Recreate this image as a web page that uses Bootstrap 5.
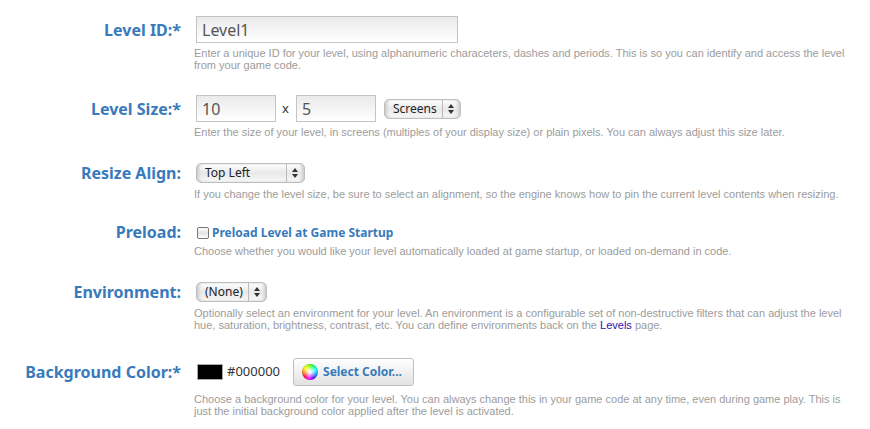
<!DOCTYPE html>
<html lang="en">
<head>
<meta charset="utf-8">
<meta name="viewport" content="width=device-width, initial-scale=1">
<title>Edit Level</title>
<link href="https://cdn.jsdelivr.net/npm/bootstrap@5.3.0/dist/css/bootstrap.min.css" rel="stylesheet">
<style>
body { font-family: "Noto Sans", "Open Sans", sans-serif; font-size: 12px; color: #333; background: #fff; }
.level-form { padding: 16px 24px 0 0; gap: 24px; }
.field-row { display: grid; grid-template-columns: 181px 1fr; column-gap: 13px; }
.field-name { font-size: 16px; line-height: 20px; font-weight: 700; color: #387abb; text-align: right; white-space: nowrap; align-self: center; }
.control-line { padding-left: 2px; min-height: 22px; }
.line-tall { min-height: 34px; }
.line-short { min-height: 17px; height: 17px; line-height: 16px; }
.help { grid-column: 2; margin: 4px 0 0; font: 11px/12px "Liberation Sans", Arial, sans-serif; color: #9c9c9c; }
.help a { color: #2a12b0; text-decoration: none; }
.text-field { width: 80px; height: 27px; padding: 0 5px; border: 1px solid #c4c4c4; border-radius: 0; font-size: 16px; line-height: 20px; color: #555; background: linear-gradient(#eaeaea, #fff); }
.text-field.wide { width: 262px; }
.times { padding: 0 7px 0 6px; font-size: 13px; }
.popup {
  width: 77px; height: 20px; padding: 0 20px 0 8px; border: 1px solid #bdbdbd; border-radius: 5px;
  font-size: 12px; line-height: 16px; color: #222;
  background:
    url("data:image/svg+xml,%3Csvg xmlns='http://www.w3.org/2000/svg' width='18' height='18'%3E%3Cpath d='M.5 0v18' stroke='%23bbb'/%3E%3Cpath d='M6 8l3-4 3 4zM6 10l3 4 3-4z' fill='%23333'/%3E%3C/svg%3E") right center / 18px 18px no-repeat,
    linear-gradient(#fff, #e8e8e8 50%, #f8f8f8);
  box-shadow: inset 3px 0 3px -1px #ccc, inset -3px 0 3px -1px #ccc;
}
.popup.align { width: 109px; }
.popup.environment { width: 71px; }
.tick.form-check-input { width: 12px; height: 12px; margin: 0 3px 0 1px; border: 1px solid #777; border-radius: 2px; background: linear-gradient(#fff, #e4e4e4 50%, #fff); }
.tick-label { font-weight: 700; color: #387abb; line-height: 16px; }
.swatch { width: 26px; height: 16px; margin: 0 4px 0 1px; border: 1px solid #aaa; background: #000; }
.hex-value { font-size: 13px; }
.color-button { height: 28px; margin-left: 13px; padding: 0 11px 0 8px; border: 1px solid #c0c0c0; border-radius: 3px; font-size: 12px; font-weight: 700; line-height: 16px; color: #387abb; background: linear-gradient(#fff, #e2e2e2); }
.wheel { width: 16px; height: 16px; margin-right: 5px; background: radial-gradient(circle, #fff 5%, #fff0 65%), conic-gradient(from 310deg, #ff0, #8f0, #0f6, #0ff, #08f, #50f, #f0f, #f04, #f80, #ff0); box-shadow: inset 0 0 1px #555; }
</style>
</head>
<body>
<form class="level-form d-flex flex-column">
  <div class="field-row">
    <label class="field-name" for="level-id">Level ID:*</label>
    <div class="control-line d-flex align-items-center"><input class="form-control text-field wide" id="level-id" type="text" value="Level1"></div>
    <p class="help">Enter a unique ID for your level, using alphanumeric characeters, dashes and periods. This is so you can identify and access the level from your game code.</p>
  </div>
  <div class="field-row">
    <label class="field-name" for="level-width">Level Size:*</label>
    <div class="control-line d-flex align-items-center">
      <input class="form-control text-field" id="level-width" type="text" value="10">
      <label class="times" for="level-height">x</label>
      <input class="form-control text-field" id="level-height" type="text" value="5">
      <select class="form-select popup ms-2" aria-label="Size unit"><option>Screens</option><option>Pixels</option></select>
    </div>
    <p class="help">Enter the size of your level, in screens (multiples of your display size) or plain pixels. You can always adjust this size later.</p>
  </div>
  <div class="field-row">
    <label class="field-name" for="resize-align">Resize Align:</label>
    <div class="control-line d-flex align-items-center"><select class="form-select popup align" id="resize-align"><option>Top Left</option><option>Center</option></select></div>
    <p class="help">If you change the level size, be sure to select an alignment, so the engine knows how to pin the current level contents when resizing.</p>
  </div>
  <div class="field-row">
    <label class="field-name line-short" for="preload">Preload:</label>
    <div class="control-line line-short d-flex align-items-center">
      <input class="form-check-input tick" id="preload" type="checkbox">
      <label class="tick-label" for="preload">Preload Level at Game Startup</label>
    </div>
    <p class="help">Choose whether you would like your level automatically loaded at game startup, or loaded on-demand in code.</p>
  </div>
  <div class="field-row">
    <label class="field-name" for="environment">Environment:</label>
    <div class="control-line d-flex align-items-center"><select class="form-select popup environment" id="environment"><option>(None)</option></select></div>
    <p class="help">Optionally select an environment for your level. An environment is a configurable set of non-destructive filters that can adjust the level hue, saturation, brightness, contrast, etc. You can define environments back on the <a href="#levels">Levels</a> page.</p>
  </div>
  <div class="field-row">
    <label class="field-name" for="select-color">Background Color:*</label>
    <div class="control-line line-tall d-flex align-items-center">
      <span class="swatch"></span><span class="hex-value">#000000</span>
      <button class="btn color-button d-flex align-items-center" id="select-color" type="button"><span class="wheel rounded-circle"></span>Select Color...</button>
    </div>
    <p class="help">Choose a background color for your level. You can always change this in your game code at any time, even during game play. This is just the initial background color applied after the level is activated.</p>
  </div>
</form>
<script src="https://cdn.jsdelivr.net/npm/bootstrap@5.3.0/dist/js/bootstrap.bundle.min.js"></script>
</body>
</html>
